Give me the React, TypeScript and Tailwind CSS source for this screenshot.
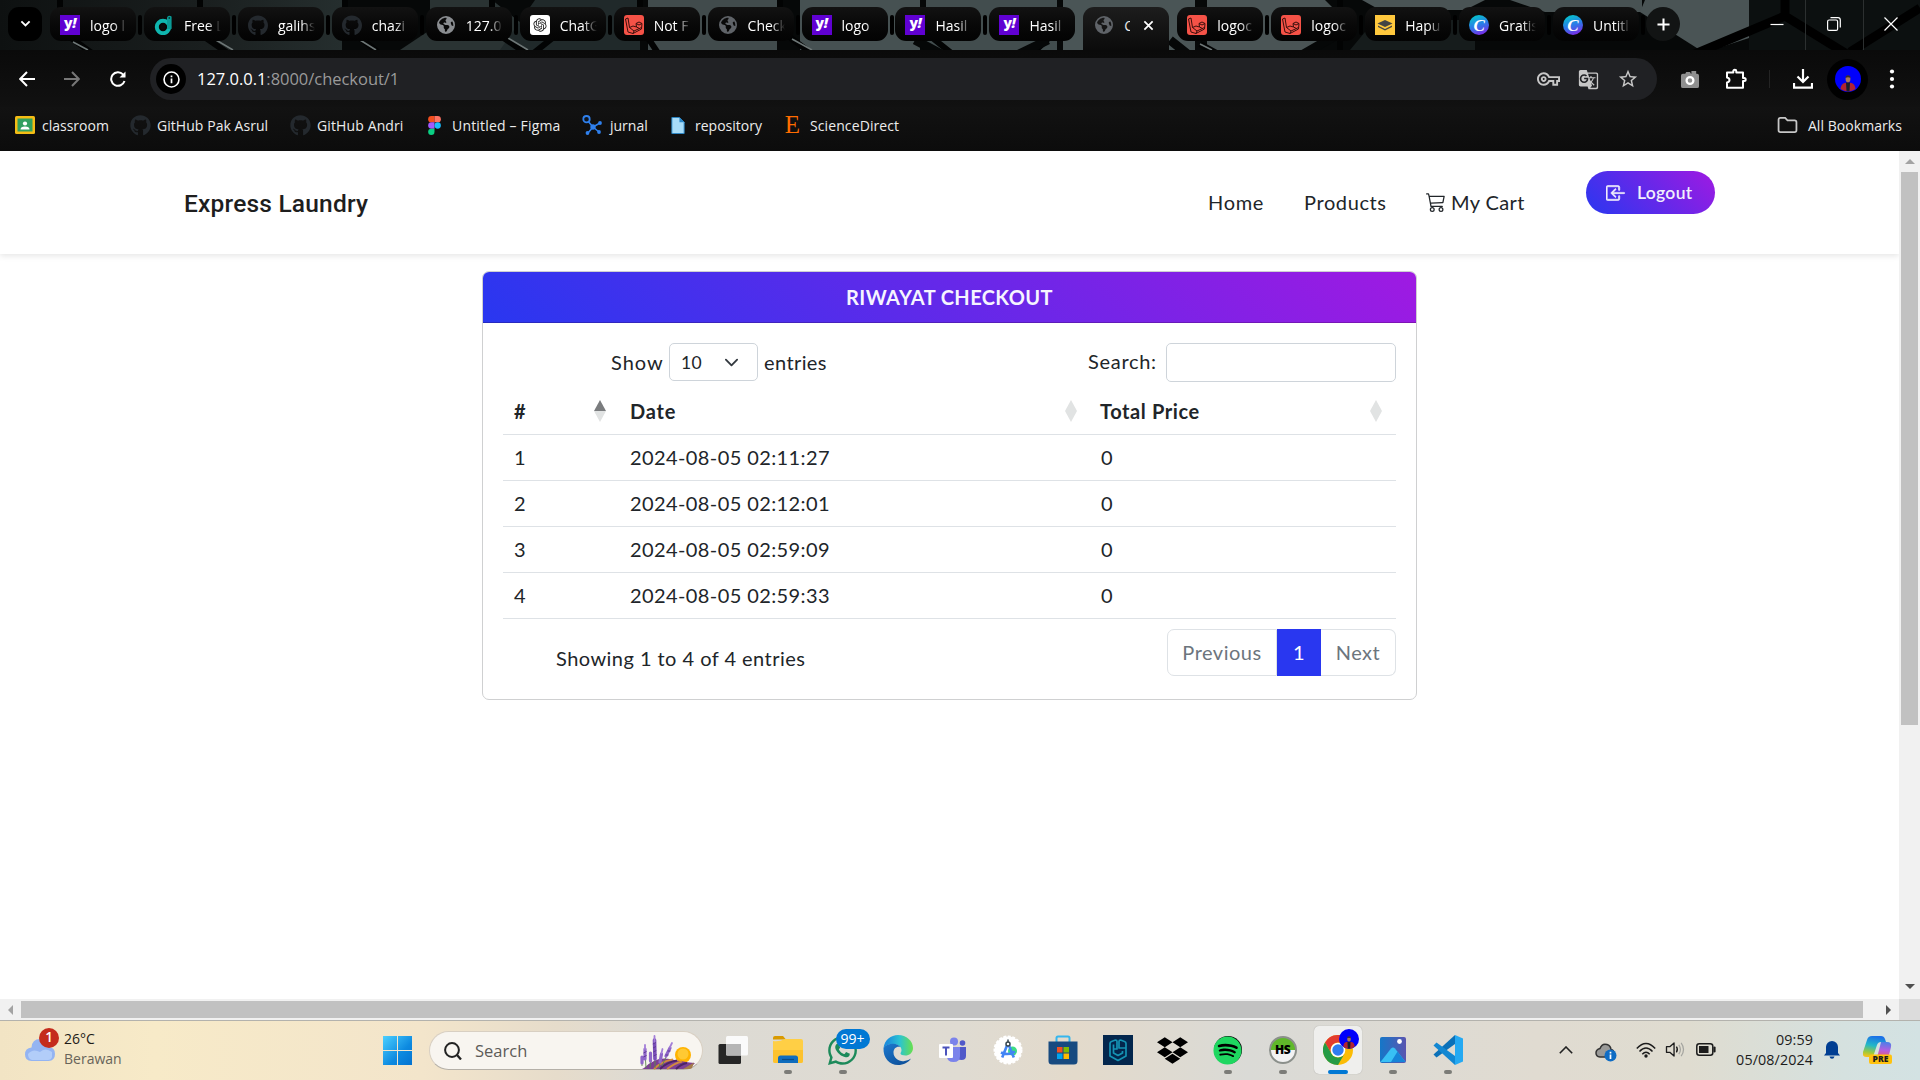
import type { ReactNode } from "react";
import { FaGithub, FaDropbox, FaSpotify, FaWhatsapp, FaEarthAmericas } from "react-icons/fa6";
import { RiOpenaiFill } from "react-icons/ri";
import { MdGTranslate, MdOutlineVpnKey, MdStarBorder } from "react-icons/md";
import { BsBoxArrowInLeft, BsCart3 } from "react-icons/bs";

/* ---------- favicons ---------- */

const Yahoo = () => (
  <span className="flex size-5 items-center justify-center bg-[#6001d2] font-['Open_Sans',sans-serif] text-[14px] leading-none font-extrabold tracking-[-0.5px] text-white">
    <span className="-mt-1">
      y<i>!</i>
    </span>
  </span>
);

const FreeLogo = () => (
  <svg viewBox="0 0 20 20" className="size-5">
    <circle cx="9" cy="12" r="6.2" fill="none" stroke="#0fb5ae" strokeWidth="4" />
    <path d="M13 14V3.5Q13 0.8 15.5 0.8T17.6 3V14Z" fill="#0a9c97" />
    <circle cx="9" cy="12" r="2.5" fill="#0b0b0b" />
    <circle cx="15.3" cy="3" r="0.9" fill="#053f3d" />
  </svg>
);

const Github = () => <FaGithub className="size-[21px] text-[#24292e]" />;
const Globe = () => <FaEarthAmericas className="size-[18px] text-[#8a8d91]" />;
const DimGlobe = () => <FaEarthAmericas className="size-[18px] text-[#5f6368]" />;

const ChatGpt = () => (
  <span className="flex size-5 items-center justify-center rounded-[3px] bg-white">
    <RiOpenaiFill className="size-4 text-[#222]" />
  </span>
);

const Laravel = () => (
  <svg viewBox="0 0 20 20" className="size-5">
    <rect width="20" height="20" rx="3" fill="#f55247" />
    <path
      d="M1.500 4L4 3l1.500 9.500L9 11M1.500 4l2.500 13 5 1.500 8.500-4.500M5.500 12.500l4.500 3.500 7.500-3.500M10 16l-1 2.500M12 8.500l3-1.500 3 1.500-3 1.500zM12 8.500l0.500 3.500 3 1.500M18 8.500l-0.500 5.500M9 11l3.500 1"
      fill="none"
      stroke="#3a0f0c"
      strokeWidth="1"
      strokeLinejoin="round"
    />
  </svg>
);

const Stack = () => (
  <svg viewBox="0 0 20 20" className="size-5">
    <rect width="20" height="20" fill="#ffc83d" />
    <path d="M10 5l7.5 3.5L10 12 2.5 8.5z" fill="#444" />
    <path d="M3 10.6l7 3.3 7-3.3v1.5L10 15.4l-7-3.3z" fill="#444" />
  </svg>
);

const Canva = () => (
  <span className="flex size-5 items-center justify-center rounded-full bg-[linear-gradient(160deg,#05c3cc_10%,#2a7be8_50%,#7d2ae8_90%)] font-['Liberation_Serif',serif] text-[17px] leading-none font-bold text-white italic">
    C
  </span>
);

/* ---------- tab strip ---------- */

const TILES = [
  ["648,0 777,0 777,50 648,50", "#414b4c"],
  ["535,0 640,0 640,50 500,50", "#20292a"],
  ["800,0 920,0 920,50 800,50", "#465152"],
  ["926,0 1057,0 1057,50 926,50", "#424d4e"],
  ["1063,0 1195,0 1195,50 1063,50", "#4a5556"],
  ["1207,0 1325,0 1335,10 1335,36 1318,50 1207,50", "#4a5455"],
  ["1362,0 1485,0 1465,10 1380,10", "#4a5455"],
  ["1375,20 1475,20 1475,50 1350,50", "#161c1c"],
  ["1510,0 1642,0 1642,12 1545,12", "#485253"],
  ["1645,0 1749,0 1749,38 1712,50 1700,50 1640,12", "#4a5455"],
];

function StripBackdrop() {
  return (
    <svg className="absolute inset-0 h-[50px] w-full" viewBox="0 0 1920 50" preserveAspectRatio="none">
      <defs>
        <linearGradient id="stripLeft">
          <stop offset="0" stopColor="#0e1111" />
          <stop offset="0.6" stopColor="#1a1f1f" />
          <stop offset="1" stopColor="#252e2e" />
        </linearGradient>
      </defs>
      <rect width="1920" height="50" fill="#060808" />
      <rect width="342" height="50" fill="url(#stripLeft)" />
      <path d="M400 50L430 30V0H492L535 34V50Z" fill="#2a3333" />
      {TILES.map(([points, fill]) => (
        <polygon key={points} points={points} fill={fill} />
      ))}
      <g stroke="#020303" strokeWidth="6" fill="none">
        <path d="M60 0V30L96 56M200 0V34L232 56M345 0V26L378 52M492 0V30L530 56M530 56L575 20" />
        <path d="M640 0V26L660 56M780 0V30L815 56M1057 30L1030 56M920 28L955 56M1200 44L1222 56M1340 0V56" />
      </g>
      <path d="M1015 56L1048 40M1190 56L1170 40M915 40L945 56M1335 36L1300 56" stroke="#050707" strokeWidth="9" fill="none" />
      <g stroke="#6d7676" strokeWidth="1.6" fill="none">
        <path d="M73 42L88 50M216 40L233 50M360 40L376 50M508 38L528 50M792 39L812 50M1200 44L1212 50" />
      </g>
      <rect x="1749" width="171" height="50" fill="#0c1010" />
      <path d="M1690 56L1785 16V0M1785 16L1850 56M1920 8L1850 52" stroke="#000" strokeWidth="9" fill="none" />
      <path d="M1805.500 0V50M1863.500 0V50" stroke="#2c3030" fill="none" />
    </svg>
  );
}

const TABS: { icon: () => ReactNode; label: string }[] = [
  { icon: Yahoo, label: "logo l" },
  { icon: FreeLogo, label: "Free L" },
  { icon: Github, label: "galihs" },
  { icon: Github, label: "chazi" },
  { icon: Globe, label: "127.0" },
  { icon: ChatGpt, label: "ChatG" },
  { icon: Laravel, label: "Not F" },
  { icon: DimGlobe, label: "Check" },
  { icon: Yahoo, label: "logo" },
  { icon: Yahoo, label: "Hasil" },
  { icon: Yahoo, label: "Hasil" },
  { icon: DimGlobe, label: "C" },
  { icon: Laravel, label: "logoc" },
  { icon: Laravel, label: "logoc" },
  { icon: Stack, label: "Hapu" },
  { icon: Canva, label: "Gratis" },
  { icon: Canva, label: "Untitl" },
];
const ACTIVE_TAB = 11;

function Tab({ icon: Icon, label, active, divider }: { icon: () => ReactNode; label: string; active: boolean; divider: boolean }) {
  return (
    <div
      className={
        active
          ? "relative flex h-[43px] w-[86px] shrink-0 items-start rounded-t-[11px] bg-linear-to-b from-[#1d1d1d] to-[#0b0b0b] pt-2 pl-[11px]"
          : "relative flex h-[34px] w-[86px] shrink-0 items-start rounded-[11px] bg-linear-to-b from-[#121212] to-[#030303] pt-2 pl-[10px]"
      }
    >
      <span className="flex size-5 shrink-0 items-center justify-center">
        <Icon />
      </span>
      <span
        className={
          active
            ? "ml-[10px] w-[6px] overflow-hidden text-[14px] leading-[21px] whitespace-nowrap text-[#e8e8e8]"
            : "ml-[10px] w-[42px] [mask-image:linear-gradient(to_right,#000_55%,transparent_88%)] text-[14px] leading-[21px] whitespace-nowrap text-white"
        }
      >
        {label}
      </span>
      {active && (
        <svg viewBox="0 0 12 12" className="mt-[5px] ml-[13px] size-[11px]">
          <path d="M1.500 1.500l9 9M10.500 1.500l-9 9" stroke="#fff" strokeWidth="1.900" />
        </svg>
      )}
      {divider && <span className="absolute top-2 -right-[6px] h-5 w-[4px] rounded-full bg-black" />}
    </div>
  );
}

function TabStrip() {
  return (
    <div className="relative h-[50px] overflow-hidden">
      <StripBackdrop />
      <div className="relative flex h-full items-start pt-[7px] pl-2">
        <div className="mr-2 flex size-[34px] shrink-0 items-center justify-center rounded-[11px] bg-black">
          <svg viewBox="0 0 12 8" className="w-[11px]">
            <path d="M1.500 1.500L6 6l4.500-4.500" stroke="#fff" strokeWidth="2" fill="none" />
          </svg>
        </div>
        <div className="flex gap-[7.94px]">
          {TABS.map((t, i) => (
            <Tab key={i} {...t} active={i === ACTIVE_TAB} divider={i !== ACTIVE_TAB && i !== ACTIVE_TAB - 1} />
          ))}
        </div>
        <div className="ml-[7px] flex size-[34px] shrink-0 items-center justify-center rounded-full bg-[#121414]">
          <svg viewBox="0 0 14 14" className="size-[13px]">
            <path d="M7 0.500v13M0.500 7h13" stroke="#fff" strokeWidth="2.200" />
          </svg>
        </div>
        <div className="ml-auto flex h-[34px] items-center gap-[43px] pr-[22px]">
          <svg viewBox="0 0 14 14" className="size-[14px]">
            <path d="M0.500 7.500h13" stroke="#fff" strokeWidth="1.200" />
          </svg>
          <svg viewBox="0 0 14 14" className="size-[14px]">
            <rect x="0.600" y="3" width="10" height="10.400" rx="1.500" fill="none" stroke="#fff" strokeWidth="1.200" />
            <path d="M3.500 0.700h7.500q2.300 0 2.300 2.300v7.500" fill="none" stroke="#fff" strokeWidth="1.200" />
          </svg>
          <svg viewBox="0 0 14 14" className="size-[14px]">
            <path d="M0.500 0.500l13 13M13.500 0.500l-13 13" stroke="#fff" strokeWidth="1.200" />
          </svg>
        </div>
      </div>
    </div>
  );
}

/* ---------- toolbar ---------- */

const Avatar = ({ className }: { className: string }) => (
  <svg viewBox="0 0 26 26" className={className}>
    <circle cx="13" cy="13" r="13" fill="#0000fb" />
    <path d="M5.500 23q0.500-5 4-6l3.500-0.500 3.500 0.500q3.500 1 4 6a13 13 0 0 1-15 0z" fill="#b02433" />
    <path d="M11 16.500h4l-0.500 9h-3z" fill="#17202c" />
    <ellipse cx="13" cy="13" rx="2.400" ry="3.300" fill="#a87860" />
    <path d="M10.500 12q0-2.700 2.500-2.700t2.500 2.700q-2.500-1.300-5 0z" fill="#3a2d2a" />
  </svg>
);

function Toolbar() {
  return (
    <div className="flex h-[57px] items-center bg-linear-to-b from-[#0a0a0a] to-[#111]">
      <div className="flex w-[150px] items-center gap-[29px] pl-[19px]">
        <svg viewBox="0 0 16 16" className="size-4">
          <path d="M16 8H1.500M8 1L1.200 8 8 15" fill="none" stroke="#fff" strokeWidth="2" />
        </svg>
        <svg viewBox="0 0 16 16" className="size-4">
          <path d="M0 8h14.500M8 1l6.800 7L8 15" fill="none" stroke="#777" strokeWidth="2" />
        </svg>
        <svg viewBox="0 0 16 16" className="ml-px size-4">
          <path d="M14.500 10A6.800 6.800 0 1 1 13 3.400L14.600 5" fill="none" stroke="#fff" strokeWidth="2" />
          <path d="M15.500 0.500v6h-6z" fill="#fff" />
        </svg>
      </div>
      <div className="mt-px flex h-[42px] w-[1507px] items-center rounded-full bg-[#202124] pr-[18px] pl-[6px]">
        <span className="flex size-[30px] items-center justify-center rounded-full bg-black">
          <svg viewBox="0 0 18 18" className="size-[17px]">
            <circle cx="9" cy="9" r="7.900" fill="none" stroke="#fff" strokeWidth="1.700" />
            <path d="M9 8v5M9 4.800v1.700" stroke="#fff" strokeWidth="1.800" />
          </svg>
        </span>
        <span className="mt-px ml-[11px] text-[16.5px] tracking-[-0.03px] text-[#9a9a9a]">
          <span className="text-white">127.0.0.1</span>:8000/checkout/1
        </span>
        <span className="ml-auto flex items-center gap-[18px] text-[#c7c7c7]">
          <MdOutlineVpnKey className="h-6 w-[23px]" />
          <MdGTranslate className="size-[21px]" />
          <MdStarBorder className="size-[22px]" />
        </span>
      </div>
      <div className="mt-px flex items-center">
        <svg viewBox="0 0 20 20" className="ml-[23px] h-[19px] w-5">
          <path d="M0.500 6q0-2 2-2H5l1-2h4l1 2h0.500V1h5v3h1q2 0 2 2v11q0 2-2 2h-15q-2 0-2-2z" fill="#8f8f8f" />
          <circle cx="10" cy="11" r="3.600" fill="none" stroke="#fff" strokeWidth="2.400" />
        </svg>
        <svg viewBox="0 0 22 22" className="ml-[25px] size-[22px]">
          <path
            d="M2 4.500h6.300V3.200q0-1.400 1.500-1.400t1.500 1.400v1.300H18V10h1.200q1.500 0 1.500 1.500T19.200 13H18v6.700H2V14.500q2.500-0.500 2.500-2.500T2 9.500z"
            fill="none"
            stroke="#fff"
            strokeWidth="2"
            strokeLinejoin="round"
          />
        </svg>
        <span className="ml-[22px] h-[18px] w-px bg-[#242424]" />
        <svg viewBox="0 0 20 20" className="ml-[23px] size-5">
          <path d="M10 0v12.500M4.500 7.500L10 13l5.500-5.500M1 14v4.700h18V14" fill="none" stroke="#fff" strokeWidth="2.200" />
        </svg>
        <span className="ml-[14px] flex size-[41px] items-center justify-center rounded-full bg-black">
          <Avatar className="size-[26px]" />
        </span>
        <svg viewBox="0 0 4 18" className="ml-[22px] h-[18px] w-[4px] overflow-visible">
          <circle cx="2" cy="1.500" r="2.100" fill="#fff" />
          <circle cx="2" cy="9" r="2.100" fill="#fff" />
          <circle cx="2" cy="16.500" r="2.100" fill="#fff" />
        </svg>
      </div>
    </div>
  );
}

function BookmarksBar() {
  return (
    <div className="flex h-[44px] items-center bg-linear-to-b from-[#121212] to-[#0c0c0c] pb-[8px] pl-[15px] text-[14px] whitespace-nowrap text-[#ececec]">
      <div className="flex w-[115px] items-center gap-[7px]">
        <svg viewBox="0 0 20 18" className="h-[18px] w-5">
          <rect width="20" height="18" rx="1.500" fill="#f5bc14" />
          <rect x="2.500" y="2.500" width="15" height="13" fill="#31a05f" />
          <circle cx="10" cy="7.500" r="2.100" fill="#fff" />
          <path d="M5.500 13.500q0-3 4.500-3t4.500 3z" fill="#fff" />
        </svg>
        classroom
      </div>
      <div className="flex w-[160px] items-center gap-[6px] tracking-[0.05px]">
        <Github />
        GitHub Pak Asrul
      </div>
      <div className="flex w-[138px] items-center gap-[6px] tracking-[0.12px]">
        <Github />
        GitHub Andri
      </div>
      <div className="flex w-[154px] items-center gap-[11px] tracking-[0.18px]">
        <svg viewBox="0 0 12 18" className="h-[19px] w-[13px]">
          <path d="M3 0h3v6H3a3 3 0 0 1 0-6z" fill="#f24e1e" />
          <path d="M6 0h3a3 3 0 0 1 0 6H6z" fill="#ff7262" />
          <path d="M3 6h3v6H3a3 3 0 0 1 0-6z" fill="#a259ff" />
          <circle cx="9" cy="9" r="3" fill="#1abcfe" />
          <path d="M3 12h3v3a3 3 0 1 1-3-3z" fill="#0acf83" />
        </svg>
        Untitled – Figma
      </div>
      <div className="flex w-[89px] items-center gap-[8px]">
        <svg viewBox="0 0 20 20" className="size-5">
          <path d="M5 5l6 7 7-4M11 12l-5 6M11 12l6 5" stroke="#2f80ed" strokeWidth="1.500" fill="none" />
          <circle cx="4.500" cy="4.200" r="3.200" fill="#10151c" stroke="#2f80ed" strokeWidth="1.800" />
          <circle cx="11" cy="12" r="2.700" fill="#2f80ed" />
          <circle cx="18" cy="8" r="1.900" fill="#2f80ed" />
          <circle cx="5.500" cy="18" r="1.900" fill="#2f80ed" />
          <circle cx="17" cy="17" r="1.900" fill="#2f80ed" />
        </svg>
        jurnal
      </div>
      <div className="flex w-[113px] items-center gap-[10px]">
        <svg viewBox="0 0 14 18" className="h-[17px] w-[14px]">
          <path d="M0.500 0.500h8l5 5v12h-13z" fill="#a8dcf8" stroke="#2b87c8" />
          <path d="M8.500 0.500v5h5z" fill="#2b87c8" />
        </svg>
        repository
      </div>
      <div className="flex items-center gap-[9px] tracking-[0.1px]">
        <span className="w-[17px] text-center font-['Liberation_Serif',serif] text-[25px] leading-5 text-[#ff6c00]">E</span>
        ScienceDirect
      </div>
      <div className="ml-auto flex items-center gap-[10px] pr-[18px] tracking-[0.06px]">
        <svg viewBox="0 0 21 17" className="h-[16px] w-[21px]">
          <path d="M1 14V3q0-2 2-2h5l2.500 2.500H18q2 0 2 2V14q0 2-2 2H3q-2 0-2-2z" fill="none" stroke="#c7c7c7" strokeWidth="1.900" />
        </svg>
        All Bookmarks
      </div>
    </div>
  );
}

/* ---------- web page ---------- */

function SiteHeader() {
  return (
    <header className="flex h-[103px] shrink-0 bg-white pl-[184px] text-[20px] tracking-[0.4px] text-[#212529] shadow-[0_2px_6px_rgba(0,0,0,0.1)]">
      <div className="mt-[35px] h-9 w-[1024px] font-['Roboto',sans-serif] text-[24.5px] leading-9 font-medium tracking-[0.2px] text-[#1e1e1e]">
        Express Laundry
      </div>
      <nav className="mt-[36px] flex h-[30px] w-[378px] items-center leading-[30px] whitespace-nowrap">
        <a className="w-[96px] tracking-[0.7px]">Home</a>
        <a className="w-[122px] tracking-[0.6px]">Products</a>
        <a className="flex items-center gap-[5px]">
          <BsCart3 className="size-5" />
          My Cart
        </a>
      </nav>
      <button className="mt-5 flex h-[43px] w-[129px] items-center rounded-full bg-[linear-gradient(45deg,#2937f0,#9f1ae2)] pt-px pl-5 text-[17.5px] tracking-[0.3px] text-[#f0eefc]">
        <BsBoxArrowInLeft className="size-5 stroke-[0.5]" stroke="currentColor" />
        <span className="mt-px ml-[11px] font-semibold">Logout</span>
      </button>
    </header>
  );
}

function SortMark({ ascending }: { ascending?: boolean }) {
  return (
    <svg viewBox="0 0 12 22" className="h-[22px] w-3">
      <path d="M6 0l6 11H0z" fill={ascending ? "#7a7c7e" : "#e1e3e3"} />
      <path d="M6 22l6-11H0z" fill="#e1e3e3" />
    </svg>
  );
}

const CHECKOUTS = [
  ["1", "2024-08-05 02:11:27", "0"],
  ["2", "2024-08-05 02:12:01", "0"],
  ["3", "2024-08-05 02:59:09", "0"],
  ["4", "2024-08-05 02:59:33", "0"],
];

function CheckoutCard() {
  return (
    <section className="mt-[17px] ml-[482px] flex h-[429px] w-[935px] flex-col overflow-hidden rounded-[7px] border border-[#cfd0d1] bg-white text-[20px] leading-[30px] tracking-[0.4px] text-[#212529]">
      <h2 className="flex h-[51px] shrink-0 items-center justify-center border-b border-black/20 bg-[linear-gradient(45deg,#2937f0,#9f1ae2)] pb-px font-bold text-[#f6f4ff]">
        RIWAYAT CHECKOUT
      </h2>
      <div className="mt-[20px] flex h-[39px] items-start pl-[128px]">
        <div className="flex w-[477px] items-center">
          <span className="-mt-px w-[58px] tracking-[1px]">Show</span>
          <div className="flex h-[38px] w-[89px] items-center justify-between rounded-[5px] border border-[#ced4da] pt-px pr-[18px] pl-[11px] text-[17.5px]">
            10
            <svg viewBox="0 0 16 16" className="size-[15px]">
              <path d="M2 5l6 6 6-6" fill="none" stroke="#343a40" strokeWidth="2" strokeLinecap="round" strokeLinejoin="round" />
            </svg>
          </div>
          <span className="-mt-px ml-[6px]">entries</span>
        </div>
        <div className="flex items-center">
          <span className="-mt-[3px] w-[78px] tracking-[0.7px]">Search:</span>
          <div className="h-[39px] w-[230px] rounded-[5px] border border-[#ced4da]" />
        </div>
      </div>
      <div className="mx-5 mt-[7px]">
        <div className="grid h-[46px] grid-cols-[117px_470px_1fr] border-b border-[#dee2e6] pb-[2px] font-bold">
          <div className="flex items-center justify-between pr-[14px] pl-[11px]">
            <span>#</span>
            <SortMark ascending />
          </div>
          <div className="flex items-center justify-between pr-[13px] pl-[10px] tracking-[0.8px]">
            <span>Date</span>
            <SortMark />
          </div>
          <div className="flex items-center justify-between pr-[14px] pl-[10px] tracking-[0.6px]">
            <span>Total Price</span>
            <SortMark />
          </div>
        </div>
        {CHECKOUTS.map(([id, date, price]) => (
          <div key={id} className="grid h-[46px] grid-cols-[117px_470px_1fr] items-center border-b border-[#dee2e6] pb-[2px]">
            <span className="pl-[11px]">{id}</span>
            <span className="pl-[10px]">{date}</span>
            <span className="pl-[11px]">{price}</span>
          </div>
        ))}
      </div>
      <div className="mr-5 ml-[73px] flex items-start justify-between pt-[10px]">
        <span className="pt-[14px] tracking-[0.46px]">Showing 1 to 4 of 4 entries</span>
        <div className="flex h-[47px] text-[#6c757d] tracking-[0.5px]">
          <span className="flex w-[110px] items-center justify-center rounded-l-[7px] border border-[#dee2e6] pb-[2px]">Previous</span>
          <span className="flex w-[44px] items-center justify-center bg-[#2937f0] pb-[2px] text-white">1</span>
          <span className="flex w-[75px] items-center justify-center rounded-r-[7px] border border-l-0 border-[#dee2e6] pb-[2px]">Next</span>
        </div>
      </div>
    </section>
  );
}

function Viewport() {
  return (
    <div className="grid h-[869px] grid-cols-[1899px_21px] grid-rows-[848px_21px] bg-white">
      <main className="flex flex-col overflow-hidden font-['Lato',sans-serif]">
        <SiteHeader />
        <CheckoutCard />
      </main>
      <div className="flex flex-col items-center justify-between bg-[#f1f1f1]">
        <div>
          <div className="flex h-[21px] items-center justify-center">
            <span className="border-x-[5px] border-b-[5px] border-x-transparent border-b-[#a3a3a3]" />
          </div>
          <div className="h-[553px] w-[17px] bg-[#c1c1c1]" />
        </div>
        <div className="flex h-[21px] items-center justify-center pb-1">
          <span className="border-x-[5px] border-t-[5px] border-x-transparent border-t-[#505050]" />
        </div>
      </div>
      <div className="flex items-center justify-between bg-[#f1f1f1]">
        <div className="flex items-center">
          <div className="flex w-[21px] justify-center">
            <span className="border-y-[5px] border-r-[5px] border-y-transparent border-r-[#a3a3a3]" />
          </div>
          <div className="h-[17px] w-[1842px] bg-[#c1c1c1]" />
        </div>
        <div className="flex w-[21px] justify-center">
          <span className="border-y-[5px] border-l-[5px] border-y-transparent border-l-[#505050]" />
        </div>
      </div>
      <div className="bg-[#dcdcdc]" />
    </div>
  );
}

/* ---------- taskbar ---------- */

function TaskItem({ children, running, active }: { children: ReactNode; running?: boolean; active?: boolean }) {
  return (
    <div className="flex h-[60px] w-[55px] shrink-0 justify-center">
      <div
        className={
          active
            ? "relative mt-[5px] flex h-12 w-12 items-center justify-center rounded-[5px] bg-[#efefed] shadow-[0_0_1px_rgba(0,0,0,0.3)]"
            : "relative mt-[5px] flex h-12 w-12 items-center justify-center"
        }
      >
        {children}
        {running && <span className="absolute bottom-0 h-[4px] w-2 rounded-full bg-[#7c7c78]" />}
        {active && <span className="absolute bottom-0 h-[4px] w-5 rounded-full bg-[#0078d4]" />}
      </div>
    </div>
  );
}

const Lavender = () => (
  <svg viewBox="0 0 56 38" className="h-[38px] w-14">
    <circle cx="43" cy="23" r="8" fill="#ffb300" />
    <circle cx="43" cy="22" r="5.500" fill="#ffc933" />
    <path d="M4 36Q16 24 30 27T55 31L49 37H2z" fill="#7d3f94" />
    <path d="M14 37Q22 29 33 27.500M27 37Q35 31 42 29.500" stroke="#d18a3e" strokeWidth="1.800" fill="none" />
    <path d="M20 37Q27 30 37 28.500M36 37Q41 32 47 31" stroke="#4d2468" strokeWidth="2" fill="none" />
    <path d="M43 37l11-6.500-2 5.500q-1 1-3 1z" fill="#a57b4b" />
    <g stroke="#5c8a4a" strokeWidth="0.900" fill="none">
      <path d="M6 36L5 20M15 36V10M10 36L11 22M22 34L30 16M2 34V24M19 36l3-14" />
    </g>
    <g stroke="#8f66c9" strokeWidth="3.200" strokeLinecap="round" fill="none">
      <path d="M5 27V17M10.500 29V21M20 30l1.500-8M26 24l4-8M2 31v-6" />
    </g>
    <path d="M15 27L14.500 8" stroke="#7a4fb8" strokeWidth="3.600" strokeLinecap="round" />
    <path d="M14.500 10V4M5 17v-4M30 15l2-4M21.500 21l1-4" stroke="#a47fd8" strokeWidth="1.800" strokeLinecap="round" />
    <path d="M13.500 24l3-1.500M13.300 20l3-1.500M13 16l3-1.500M12.800 12l3-1.500M3.500 25l3-1.500M3.500 21l3-1.500M25.500 23l3 0M27.500 19l3 0" stroke="#5f3896" strokeWidth="1" />
  </svg>
);

const TaskView = () => (
  <svg viewBox="0 0 30 30" className="size-[30px]">
    <rect x="0.500" y="9" width="22.500" height="20" rx="1.500" fill="#262626" />
    <rect x="8" y="1" width="22" height="19.500" rx="1.500" fill="#fafafa" />
    <path d="M8 9h15v11.500H9.500Q8 20.500 8 19z" fill="#b5b5b5" />
  </svg>
);

const Explorer = () => (
  <svg viewBox="0 0 30 28" className="h-7 w-[30px]">
    <path d="M0 2q0-2 2-2h8l3 3.500H0z" fill="#d99a00" />
    <path d="M0 5q6 1 12-2h16q2 0 2 2v20q0 2-2 2H2q-2 0-2-2z" fill="#ffcf45" />
    <path d="M0 14h30v11q0 2-2 2H2q-2 0-2-2z" fill="#fdc22e" />
    <path d="M5 27v-5q0-2.500 2.500-2.500h15Q25 19.500 25 22v5z" fill="#0f6cbd" />
    <path d="M9 23.500h12" stroke="#084a86" strokeWidth="1.200" />
  </svg>
);

const EdgeIcon = () => (
  <svg viewBox="0 0 30 30" className="size-[30px]">
    <defs>
      <linearGradient id="edgeTop" x1="0" x2="1">
        <stop offset="0.150" stopColor="#1c8fdc" />
        <stop offset="0.550" stopColor="#2bc3d2" />
        <stop offset="1" stopColor="#69e04c" />
      </linearGradient>
      <linearGradient id="edgeLow" x1="0" y1="0" x2="0.800" y2="1">
        <stop offset="0" stopColor="#1b78cf" />
        <stop offset="1" stopColor="#0d4f98" />
      </linearGradient>
    </defs>
    <path d="M0.500 13C1.500 5 8 0 15 0c8.500 0 15 6 15 13 0 5-4 7.500-7.500 7.500-3 0-5-1-5-2s1-1.500 1-3.500c0-3.500-4-6-8.500-6-4 0-7.500 1.500-9.500 4z" fill="url(#edgeTop)" />
    <path d="M0.500 13C2.500 10 6 8.800 10 8.800c3.500 0 6 1.500 7.500 3.200-4-1-7 1.500-7 5.500 0 6 6 9.500 11 8.500 3-0.500 5-1.500 6.500-2.500-2.500 4-7.500 6.500-13 6.500C6.500 30 0 23 0.500 13z" fill="url(#edgeLow)" />
  </svg>
);

const Teams = () => (
  <svg viewBox="0 0 28 26" className="h-[26px] w-7">
    <circle cx="15" cy="4.500" r="4" fill="#7b83eb" />
    <circle cx="23.500" cy="6" r="2.800" fill="#5059c9" />
    <path d="M18 10h9v9q0 4-4.500 4T18 19z" fill="#5059c9" />
    <path d="M8 10h13v9q0 6-6.500 6T8 19z" fill="#7b83eb" />
    <rect x="0" y="7" width="14" height="14" rx="1" fill="#fff" />
    <path d="M3.500 10.500h7M7 10.500v8" stroke="#4b53bc" strokeWidth="2" />
  </svg>
);

const AndroidStudio = () => (
  <svg viewBox="0 0 30 30" className="size-[30px]">
    <circle cx="15" cy="15" r="13.500" fill="#fff" stroke="#fff" strokeWidth="2" strokeDasharray="3 1.500" />
    <circle cx="19.500" cy="16" r="4.500" fill="#3ddc84" />
    <path d="M14.200 10l-5 12.500M15.800 10l5 12.500M8 17.500q7 3.500 14-1" stroke="#4285f4" strokeWidth="2.600" fill="none" />
    <circle cx="15" cy="9" r="2" fill="#fff" stroke="#37474f" strokeWidth="1.500" />
    <path d="M15 4.500v3" stroke="#37474f" strokeWidth="1.500" />
  </svg>
);

const Store = () => (
  <svg viewBox="0 0 30 30" className="size-[30px]">
    <path d="M8.500 7V3q0-1.500 1.500-1.500h10q1.500 0 1.500 1.500v4" fill="none" stroke="#35b6ee" strokeWidth="2" />
    <path d="M0.500 6.500h29V26q0 3.500-3.500 3.500H4Q0.500 29.500 0.500 26z" fill="#174a80" />
    <path d="M9 12h5.500v5.500H9z" fill="#f25022" />
    <path d="M15.500 12H21v5.500h-5.500z" fill="#7fba00" />
    <path d="M9 18.500h5.500V24H9z" fill="#00a4ef" />
    <path d="M15.500 18.500H21V24h-5.500z" fill="#ffb900" />
  </svg>
);

const Hexa = () => (
  <svg viewBox="0 0 30 30" className="size-[30px]">
    <rect width="30" height="30" fill="#03264d" />
    <path
      d="M7 14V8.500Q7 7 8.500 6.500L12.500 5Q14 5 14 6.500V14H10.500V9.500M7 14v7l8 4.500 8-4.500V8.500Q23 7 21.500 6.500L17.500 5Q16 5 16 6.500V13H22.500M10.500 14v4l4.500 2.500 4.500-2.500V16"
      fill="none"
      stroke="#1593b4"
      strokeWidth="1.700"
      strokeLinejoin="round"
    />
  </svg>
);

const Heidi = () => (
  <span className="flex size-[28px] items-center justify-center rounded-full border-2 border-[#8b908b] bg-[linear-gradient(#5fb82a_48%,#f2f2f2_52%)] text-[12px] leading-none font-extrabold tracking-[-0.5px] text-black">
    HS
  </span>
);

const Chrome = () => (
  <svg viewBox="0 0 30 30" className="size-[30px]">
    <circle cx="15" cy="15" r="15" fill="#fbbc05" />
    <path d="M2 7.500A15 15 0 0 1 28 7.500H15A7.500 7.500 0 0 0 8.500 18.700z" fill="#e33b2e" />
    <path d="M2 7.500l6.500 11.200A7.500 7.500 0 0 0 21.500 18.700L15 30A15 15 0 0 1 2 7.500z" fill="#259b45" />
    <circle cx="15" cy="15" r="7.300" fill="#fff" />
    <circle cx="15" cy="15" r="5.700" fill="#2f7cf0" />
  </svg>
);

const Photos = () => (
  <svg viewBox="0 0 26 26" className="size-[26px]">
    <defs>
      <linearGradient id="photoSky" x1="0" x2="1">
        <stop offset="0" stopColor="#1577c8" />
        <stop offset="1" stopColor="#5a55b0" />
      </linearGradient>
    </defs>
    <rect width="26" height="26" rx="2" fill="url(#photoSky)" />
    <path d="M0.500 25L11 11.500q2-2 4 0L25.500 25z" fill="#38c0f4" />
    <path d="M15 11.500L25.500 25H11l6.500-10.500z" fill="#1684d8" />
    <circle cx="19.500" cy="4.500" r="2.400" fill="#fff" />
  </svg>
);

const VsCode = () => (
  <svg viewBox="0 0 30 30" className="size-[30px]">
    <path d="M22 0L30 3.500v23L22 30z" fill="#25a9f2" />
    <path d="M22 0L0.500 19.500 3.500 22.500 22 9z" fill="#0a70b8" />
    <path d="M22 30L0.500 10.500 3.500 7.500 22 21z" fill="#1287d2" />
  </svg>
);

function Weather() {
  return (
    <div className="flex w-[370px] shrink-0 items-start pl-[25px]">
      <div className="relative h-[60px] w-[39px]">
        <svg viewBox="0 0 30 24" className="mt-[17px] h-6 w-[30px]">
          <path d="M6.500 9.500Q7 1 15 1t9 8q6 0.500 6 7t-6.500 7h-17Q0 23 0 16.500t6.500-7z" fill="#94b4f2" />
          <path d="M3 16q5-6 12-2 5-5 12 0v5q-1 3-4 3H7q-4-1-4-6z" fill="#b2cdf9" />
        </svg>
        <span className="absolute top-[7px] left-[14px] flex size-5 items-center justify-center rounded-full bg-[#c42b1c] text-[13.5px] leading-none font-semibold text-white">
          1
        </span>
      </div>
      <div className="mt-[8px] text-[14px] leading-5">
        <div className="text-[#1c1b18]">26°C</div>
        <div className="text-[#68645a]">Berawan</div>
      </div>
    </div>
  );
}

function Tray() {
  return (
    <div className="ml-[70px] flex h-[57px] items-center">
      <span className="flex w-[41px] justify-center">
        <svg viewBox="0 0 14 8" className="w-[14px]">
          <path d="M0.800 7.200L7 1l6.200 6.200" fill="none" stroke="#222" strokeWidth="1.600" />
        </svg>
      </span>
      <span className="flex w-10 justify-center">
        <svg viewBox="0 0 22 20" className="mt-1 h-5 w-[22px]">
          <path d="M5 15q-4-0.500-4-4t4-4.500Q7 1 12 2.500q3.500 1 4 5Q19 8 19 12t-4 3z" fill="#9a9a98" stroke="#333" strokeWidth="1.500" />
          <circle cx="15.500" cy="13.500" r="6" fill="#0f6cc4" />
          <path d="M15.500 12.500v4.500M15.500 9.700v1.700" stroke="#fff" strokeWidth="1.700" />
        </svg>
      </span>
      <span className="ml-[5px] flex w-[30px] justify-center">
        <svg viewBox="0 0 20 16" className="h-4 w-5">
          <g fill="none" stroke="#1c1c1c" strokeWidth="1.500">
            <path d="M0.800 6.500q9.200-10 18.400 0M3.500 9.500q6.500-7 13 0M6.300 12.200q3.700-4 7.400 0" />
          </g>
          <circle cx="10" cy="14" r="1.700" fill="#1c1c1c" />
        </svg>
      </span>
      <span className="flex w-[28px] justify-center">
        <svg viewBox="0 0 20 18" className="h-[17px] w-5">
          <path d="M1 6h3.500L9 2v14l-4.500-4H1z" fill="none" stroke="#1c1c1c" strokeWidth="1.400" strokeLinejoin="round" />
          <path d="M11.500 6q2 3 0 6" fill="none" stroke="#1c1c1c" strokeWidth="1.400" />
          <path d="M14 4q3.500 5 0 10M16.500 2q5 7 0 14" fill="none" stroke="#a5a5a0" strokeWidth="1.300" />
        </svg>
      </span>
      <span className="flex w-[33px] justify-center">
        <svg viewBox="0 0 20 13" className="h-[13px] w-5">
          <rect x="0.800" y="0.800" width="16" height="11.400" rx="2.500" fill="none" stroke="#1c1c1c" strokeWidth="1.500" />
          <rect x="3" y="3" width="9.500" height="7" fill="#1c1c1c" />
          <path d="M18.500 4.500v4" stroke="#1c1c1c" strokeWidth="2.200" strokeLinecap="round" />
        </svg>
      </span>
      <div className="w-[91px] text-right text-[14.3px] leading-5 tracking-[0.1px] text-[#1c1c1c]">
        <div>09:59</div>
        <div>05/08/2024</div>
      </div>
      <svg viewBox="0 0 16 19" className="ml-[11px] h-[19px] w-4">
        <path d="M2 13V7a6 6 0 0 1 12 0v6l2 2.500H0z" fill="#003e92" />
        <path d="M5.500 16.500h5q-0.500 2.300-2.500 2.300t-2.500-2.300z" fill="#003e92" />
      </svg>
      <svg viewBox="0 0 29 29" className="ml-[23px] h-[29px] w-[29px]">
        <defs>
          <linearGradient id="pilotLeft" x1="0.500" y1="0" x2="0.300" y2="1">
            <stop offset="0" stopColor="#1a6fe8" />
            <stop offset="0.450" stopColor="#22b8c8" />
            <stop offset="0.800" stopColor="#a0c93a" />
            <stop offset="1" stopColor="#f6c21c" />
          </linearGradient>
          <linearGradient id="pilotRight" x1="0.500" y1="0" x2="0.400" y2="1">
            <stop offset="0" stopColor="#4c7fe8" />
            <stop offset="0.500" stopColor="#b25fe0" />
            <stop offset="1" stopColor="#f0586a" />
          </linearGradient>
        </defs>
        <path d="M9 1h9q3 0 4 3l1 3h-5q-3 0-4 3l-3 9q-1 3-4 3H3q-4 0-3-5L4 5q1-4 5-4z" fill="url(#pilotLeft)" />
        <path d="M18 7h6q5 0 4 5l-2 8q-1 3-5 3h-9q2-1 3-4z" fill="url(#pilotRight)" />
        <rect x="6" y="19.500" width="23" height="9.500" rx="2" fill="#ffc20e" />
        <text x="17.500" y="27.300" textAnchor="middle" fontSize="8.500" fontWeight="800" fill="#1c1c1c">
          PRE
        </text>
      </svg>
    </div>
  );
}

function Taskbar() {
  return (
    <div className="flex h-[60px] overflow-hidden border-t border-[#b3b2ad] bg-[linear-gradient(90deg,#f2e4c4_0%,#f7eac8_8%,#f3e5cb_22%,#e6dccb_29%,#dcdad4_34%,#dfdbd2_50%,#e3dacb_56%,#dadad6_65%,#e0dbd1_80%,#dfdcd0_88%,#d5e1df_96%,#d3e2e3_100%)]">
      <Weather />
      <TaskItem>
        <svg viewBox="0 0 29 29" className="size-[29px]">
          <defs>
            <linearGradient id="winFill" x1="0" y1="0" x2="1" y2="1">
              <stop offset="0" stopColor="#4cd0ff" />
              <stop offset="0.600" stopColor="#0d8ae0" />
              <stop offset="1" stopColor="#0472d0" />
            </linearGradient>
          </defs>
          <path d="M0 0h14v14H0zM15 0h14v14H15zM0 15h14v14H0zM15 15h14v14H15z" fill="url(#winFill)" />
        </svg>
      </TaskItem>
      <div className="mt-[10px] mr-[2px] ml-[4px] flex h-[39px] w-[274px] shrink-0 items-center rounded-full border border-[#d8cfc2] border-b-[#b5b0a8] bg-[#f8f5f0] pr-[6px] pl-[14px]">
        <svg viewBox="0 0 18 18" className="size-[18px]">
          <circle cx="8" cy="8" r="6.900" fill="none" stroke="#222" strokeWidth="2" />
          <path d="M12.800 12.800L17 17.500" stroke="#222" strokeWidth="2.300" />
        </svg>
        <span className="mt-px ml-[13px] text-[16.5px] text-[#5d5b58]">Search</span>
        <span className="ml-auto">
          <Lavender />
        </span>
      </div>
      <TaskItem>
        <TaskView />
      </TaskItem>
      <TaskItem running>
        <Explorer />
      </TaskItem>
      <TaskItem running>
        <FaWhatsapp className="size-[33px] text-[#1c8a5a]" />
        <span className="absolute top-[3px] left-[17px] flex h-[20px] w-[34px] items-center justify-center rounded-full bg-[#0078d4] text-[14px] leading-none text-white">
          99+
        </span>
      </TaskItem>
      <TaskItem>
        <EdgeIcon />
      </TaskItem>
      <TaskItem>
        <Teams />
      </TaskItem>
      <TaskItem>
        <AndroidStudio />
      </TaskItem>
      <TaskItem>
        <Store />
      </TaskItem>
      <TaskItem>
        <Hexa />
      </TaskItem>
      <TaskItem>
        <FaDropbox className="size-[31px] text-black" />
      </TaskItem>
      <TaskItem running>
        <span className="flex size-7 items-center justify-center rounded-full bg-black">
          <FaSpotify className="size-[29px] shrink-0 text-[#1ed760]" />
        </span>
      </TaskItem>
      <TaskItem running>
        <Heidi />
      </TaskItem>
      <TaskItem active>
        <Chrome />
        <Avatar className="absolute top-[3px] right-[3px] size-[20px]" />
      </TaskItem>
      <TaskItem running>
        <Photos />
      </TaskItem>
      <TaskItem running>
        <VsCode />
      </TaskItem>
      <Tray />
    </div>
  );
}

export default function App() {
  return (
    <div className="flex h-[1080px] w-[1920px] flex-col overflow-hidden bg-white font-['Open_Sans',sans-serif]">
      <TabStrip />
      <Toolbar />
      <BookmarksBar />
      <Viewport />
      <Taskbar />
    </div>
  );
}
